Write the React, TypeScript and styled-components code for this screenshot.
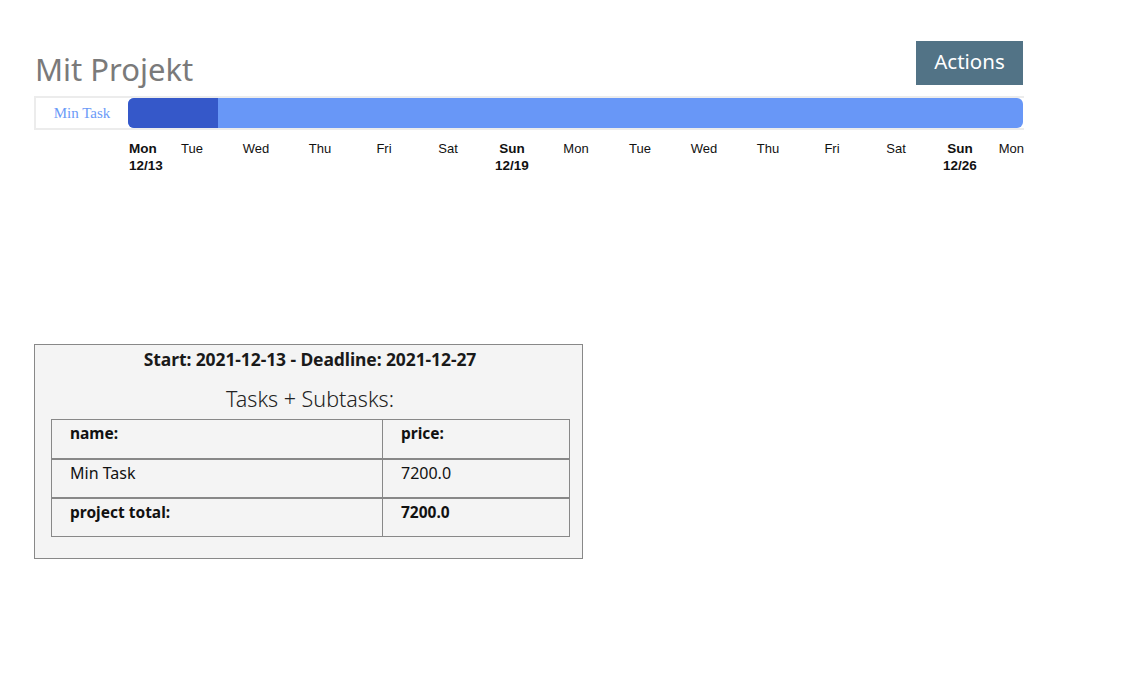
import React from 'react';
import styled, { createGlobalStyle } from 'styled-components';

const GlobalStyle = createGlobalStyle`
  body {
    margin: 0;
    background: #ffffff;
    font-family: "Noto Sans", "Segoe UI", sans-serif;
  }
  * {
    box-sizing: border-box;
  }
`;

const Page = styled.div`
  padding: 41px 0 0 34px;
  width: 1024px;
`;

const TopBar = styled.div`
  display: flex;
  justify-content: space-between;
  align-items: flex-start;
  height: 55px;
`;

const Title = styled.h1`
  margin: 8px 0 0 1px;
  font-size: 31px;
  font-weight: 400;
  color: #7a7a7a;
  line-height: 40px;
`;

const ActionsButton = styled.button`
  width: 107px;
  height: 44px;
  background: #527386;
  color: #ffffff;
  border: none;
  font-family: "Noto Sans", sans-serif;
  font-size: 20.5px;
  margin-right: 1px;
  padding: 0 0 4px;
`;

const Gantt = styled.div`
  border: 2px solid #ececec;
  border-right: none;
  display: flex;
  height: 34px;
`;

const TaskLabel = styled.div`
  width: 92px;
  flex: none;
  display: flex;
  align-items: center;
  justify-content: center;
  font-family: "Liberation Serif", serif;
  font-size: 15px;
  color: #6b9af7;
`;

const Track = styled.div`
  flex: 1;
  display: flex;
  background: #6897f7;
  border-radius: 6px;
  overflow: hidden;
  margin-right: 1px;
`;

const Progress = styled.div`
  background: #3558c9;
  height: 100%;
`;

const DateRow = styled.div`
  position: relative;
  margin-left: 94px;
  width: 896px;
  height: 44px;
  font-family: "Liberation Sans", Arial, sans-serif;
  font-size: 13px;
  color: #111;
`;

const DayLabel = styled.div<{ $bold: boolean }>`
  position: absolute;
  top: 10px;
  line-height: 17px;
  font-weight: ${({ $bold }) => ($bold ? 700 : 400)};
  font-size: ${({ $bold }) => ($bold ? '13.5px' : '13px')};
  white-space: nowrap;
`;

const Card = styled.div`
  margin-top: 170px;
  width: 549px;
  border: 1px solid #888888;
  background: #f4f4f4;
  padding: 2px 13px 21px 16px;
`;

const DatesLine = styled.div`
  text-align: center;
  font-weight: 700;
  font-size: 17.5px;
  color: #1a1a1a;
  line-height: 24px;
  letter-spacing: -0.1px;
`;

const SubTitle = styled.div`
  text-align: center;
  font-size: 21.5px;
  font-weight: 300;
  color: #222;
  margin-top: 15px;
  line-height: 26px;
  margin-bottom: 7px;
`;

const Table = styled.table`
  width: 519px;
  table-layout: fixed;
  border-collapse: collapse;
  border: 1px solid #888888;
  font-size: 16px;
  color: #111;
`;

const Row = styled.tr`
  & + & td {
    border-top: 2px solid #888888;
  }
`;

const Cell = styled.td<{ $bold?: boolean; $wide?: boolean }>`
  width: ${({ $wide }) => ($wide ? '331px' : 'auto')};
  padding: 2px 17px 12px 18px;
  vertical-align: top;
  height: 39px;
  font-size: ${({ $bold }) => ($bold ? '15.5px' : '16px')};
  font-weight: ${({ $bold }) => ($bold ? 700 : 400)};
  & + & {
    border-left: 1px solid #888888;
  }
`;

const days = ['Mon', 'Tue', 'Wed', 'Thu', 'Fri', 'Sat', 'Sun', 'Mon', 'Tue', 'Wed', 'Thu', 'Fri', 'Sat', 'Sun', 'Mon'];
const dates: Record<number, string> = { 0: '12/13', 6: '12/19', 13: '12/26' };

export default function App() {
  return (
    <>
      <GlobalStyle />
      <Page>
        <TopBar>
          <Title>Mit Projekt</Title>
          <ActionsButton>Actions</ActionsButton>
        </TopBar>
        <Gantt>
          <TaskLabel>Min Task</TaskLabel>
          <Track>
            <Progress style={{ width: `${(90 / 895) * 100}%` }} />
          </Track>
        </Gantt>
        <DateRow>
          {days.map((d, i) => {
            const w = 50;
            const last = i === days.length - 1;
            let left = i * 64 - w / 2;
            if (i === 0) left = 1;
            if (last) left = 896 - w;
            const bold = dates[i] !== undefined;
            return (
              <DayLabel
                key={i}
                $bold={bold}
                style={{
                  left,
                  width: w,
                  textAlign: i === 0 ? 'left' : last ? 'right' : 'center',
                }}
              >
                {d}
                {bold && <div>{dates[i]}</div>}
              </DayLabel>
            );
          })}
        </DateRow>
        <Card>
          <DatesLine>Start: 2021-12-13 - Deadline: 2021-12-27</DatesLine>
          <SubTitle>Tasks + Subtasks:</SubTitle>
          <Table>
            <tbody>
              <Row>
                <Cell $wide $bold>name:</Cell>
                <Cell $bold>price:</Cell>
              </Row>
              <Row>
                <Cell $wide>Min Task</Cell>
                <Cell>7200.0</Cell>
              </Row>
              <Row>
                <Cell $wide $bold>project total:</Cell>
                <Cell $bold>7200.0</Cell>
              </Row>
            </tbody>
          </Table>
        </Card>
      </Page>
    </>
  );
}
